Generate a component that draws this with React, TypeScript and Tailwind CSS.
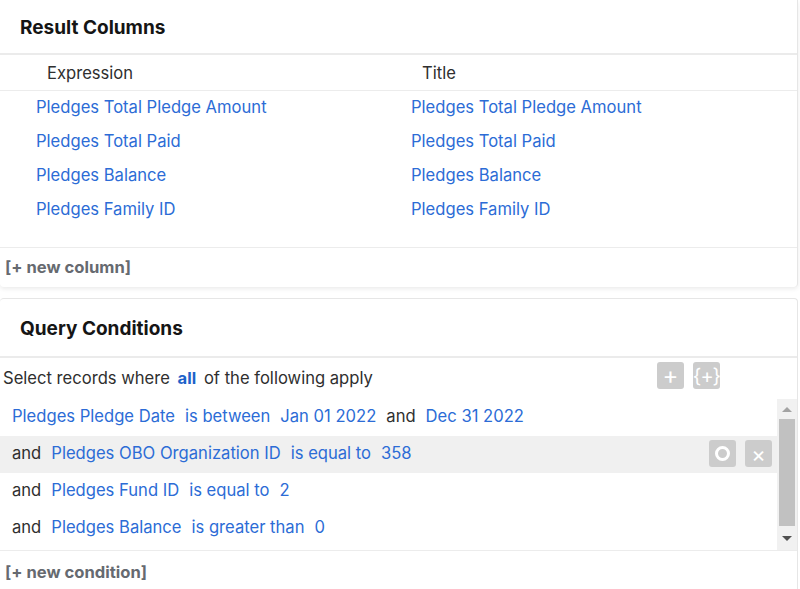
import React from "react";

const columns = [
  "Pledges Total Pledge Amount",
  "Pledges Total Paid",
  "Pledges Balance",
  "Pledges Family ID",
];

type Part = { text: string; kind: "link" | "plain" };

const conditions: { lead?: string; parts: Part[]; active?: boolean }[] = [
  {
    parts: [
      { text: "Pledges Pledge Date", kind: "link" },
      { text: "is between", kind: "link" },
      { text: "Jan 01 2022", kind: "link" },
      { text: "and", kind: "plain" },
      { text: "Dec 31 2022", kind: "link" },
    ],
  },
  {
    lead: "and",
    active: true,
    parts: [
      { text: "Pledges OBO Organization ID", kind: "link" },
      { text: "is equal to", kind: "link" },
      { text: "358", kind: "link" },
    ],
  },
  {
    lead: "and",
    parts: [
      { text: "Pledges Fund ID", kind: "link" },
      { text: "is equal to", kind: "link" },
      { text: "2", kind: "link" },
    ],
  },
  {
    lead: "and",
    parts: [
      { text: "Pledges Balance", kind: "link" },
      { text: "is greater than", kind: "link" },
      { text: "0", kind: "link" },
    ],
  },
];

function GrayButton({ children }: { children: React.ReactNode }) {
  return (
    <span className="flex h-[27px] w-[27px] items-center justify-center rounded-[3px] bg-[#cccccc] text-white">
      {children}
    </span>
  );
}

function Scrollbar() {
  return (
    <div className="flex w-[20px] shrink-0 flex-col items-center bg-[#f1f1f1]">
      <div className="flex h-[20px] items-center justify-center">
        <span className="h-0 w-0 border-x-[5px] border-b-[5px] border-x-transparent border-b-[#a3a3a3]" />
      </div>
      <div className="h-[107px] w-[16px] bg-[#c1c1c1]" />
      <div className="flex flex-1 items-center justify-center">
        <span className="h-0 w-0 border-x-[5px] border-t-[5px] border-x-transparent border-t-[#505050]" />
      </div>
    </div>
  );
}

export default function App() {
  return (
    <div className="w-[800px] bg-white font-['Inter',sans-serif] text-[16.6px] text-[#2f2f2f]">
      <section className="mr-[2px] rounded-b-[4px] border-r border-[#e6e6e6] bg-white shadow-[0_2px_4px_rgba(0,0,0,0.08)]">
        <div className="flex h-[55px] items-center border-b-2 border-[#ebebeb] px-5 pt-[4px]">
          <h2 className="text-[19px] font-bold text-[#151515]">Result Columns</h2>
        </div>
        <div className="grid h-[36px] grid-cols-[375px_1fr] items-center border-b border-[#ececec] pt-[2px]">
          <span className="pl-[47px]">Expression</span>
          <span className="pl-[47px]">Title</span>
        </div>
        <div className="pb-[20px]">
          {columns.map((c) => (
            <div key={c} className="grid h-[34px] grid-cols-[375px_1fr] items-center pb-[1px] text-[#2c6cd6]">
              <span className="pl-[36px]">{c}</span>
              <span className="pl-[36px]">{c}</span>
            </div>
          ))}
        </div>
        <div className="flex h-[40px] items-center border-t border-[#ececec] pl-[5px] font-bold text-[#666a70]">
          [+ new column]
        </div>
      </section>

      <section className="mr-[2px] mt-[11px] rounded-t-[4px] border-r border-t border-[#e6e6e6] bg-white">
        <div className="flex h-[59px] items-center border-b-2 border-[#ebebeb] px-5 pt-[3px]">
          <h2 className="text-[19px] font-bold text-[#151515]">Query Conditions</h2>
        </div>
        <div className="flex h-[41px] items-center justify-between pl-[3px] pr-[77px]">
          <span>
            Select records where{" "}
            <span className="mx-[3px] font-bold text-[#1d62c9]">all</span>{" "}
            of the following apply
          </span>
          <span className="-mt-[6px] flex gap-[9px]">
            <GrayButton>
              <span className="text-[24px] leading-none">+</span>
            </GrayButton>
            <GrayButton>
              <span className="text-[20px] leading-none tracking-[-1px]">{"{+}"}</span>
            </GrayButton>
          </span>
        </div>
        <div className="flex h-[152px] border-b border-[#ececec]">
          <div className="flex-1 overflow-hidden">
            {conditions.map((row, i) => (
              <div
                key={i}
                className={
                  "flex h-[37px] items-center justify-between pb-[2px] pl-[12px] pr-[5px] " +
                  (row.active ? "bg-[#f0f0f0]" : "")
                }
              >
                <span className="flex gap-[10px]">
                  {row.lead ? <span>{row.lead}</span> : null}
                  {row.parts.map((p, j) => (
                    <span key={j} className={p.kind === "link" ? "text-[#2c6cd6]" : ""}>
                      {p.text}
                    </span>
                  ))}
                </span>
                {row.active ? (
                  <span className="flex gap-[9px]">
                    <GrayButton>
                      <span className="h-[15px] w-[15px] rounded-full border-[3px] border-white" />
                    </GrayButton>
                    <GrayButton>
                      <span className="text-[22px] leading-none">×</span>
                    </GrayButton>
                  </span>
                ) : null}
              </div>
            ))}
          </div>
          <Scrollbar />
        </div>
        <div className="flex h-[42px] items-center pl-[5px] font-bold text-[#666a70]">
          [+ new condition]
        </div>
      </section>
    </div>
  );
}
